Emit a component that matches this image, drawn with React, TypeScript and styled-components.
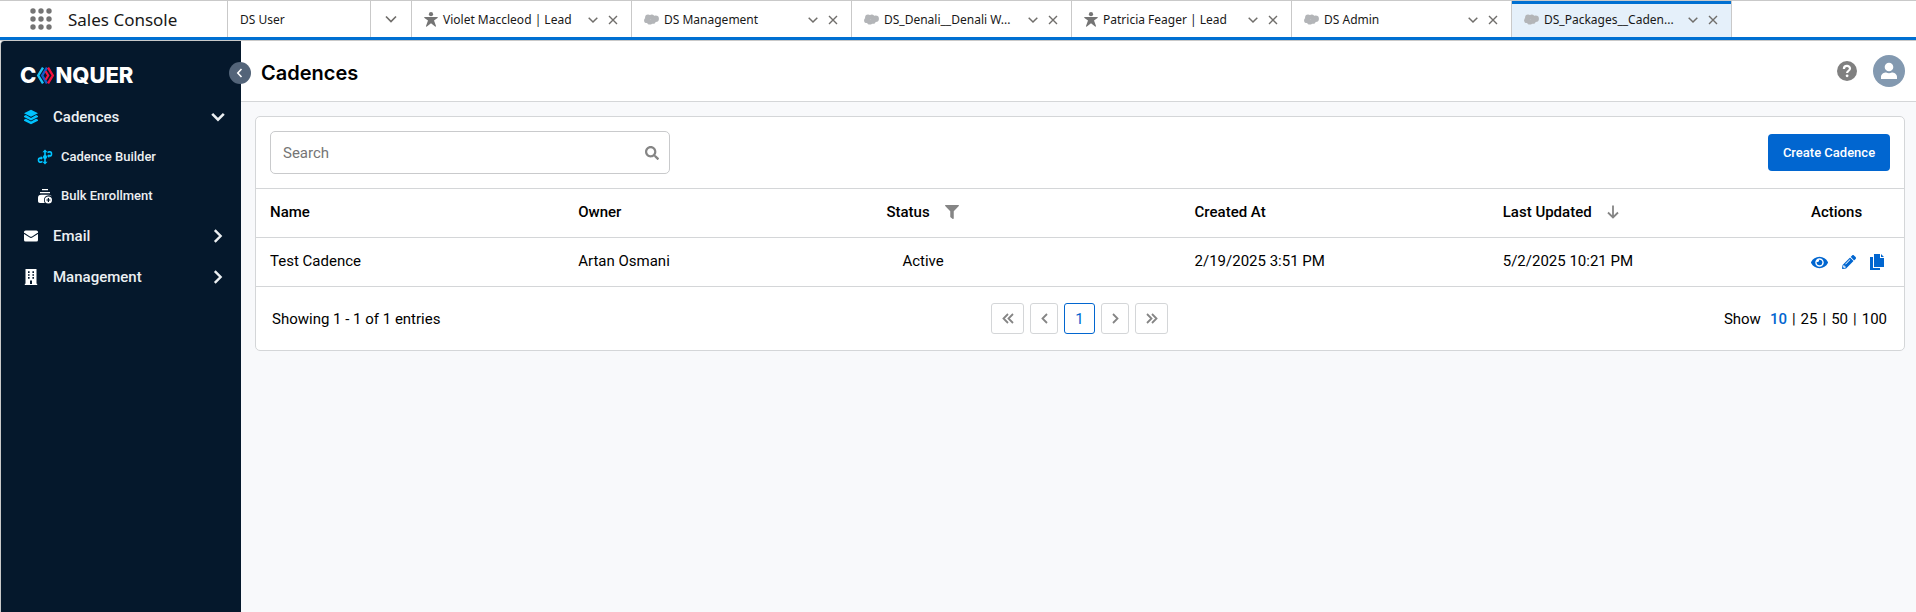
import React from 'react';
import styled, { createGlobalStyle } from 'styled-components';
import { FaEye, FaFilter, FaPencilAlt, FaSearch } from 'react-icons/fa';

const ui = 'Roboto, "Liberation Sans", sans-serif';
const console_ = '"Noto Sans", "Open Sans", sans-serif';
const display = 'Inter, "Liberation Sans", sans-serif';

const GlobalStyle = createGlobalStyle`
  *, *::before, *::after { box-sizing: border-box; }
  body { margin: 0; background: #f8f9fb; color: #000; font-family: ${ui}; font-size: 15px; }
  button { font: inherit; color: inherit; border: 0; padding: 0; background: none; cursor: pointer; }
  a { color: inherit; text-decoration: none; }
  ul { list-style: none; margin: 0; padding: 0; }
  svg { display: block; flex: none; }
`;

const Page = styled.div`
  display: flex;
  flex-direction: column;
  min-height: 100vh;
`;

/* Console bar */
const ConsoleBar = styled.header`
  display: flex;
  height: 41px;
  background: #fff;
  border-top: 1px solid #c9c9c9;
  border-bottom: 1px solid #c9c9c9;
  box-shadow: inset 0 -3px 0 #0070d2;
  padding-bottom: 3px;
  font-family: ${console_};
  font-size: 12px;
  color: #181818;
`;

const Launcher = styled.div`
  display: flex;
  align-items: center;
  gap: 16px;
  width: 227px;
  padding-left: 30px;
  font-size: 17px;
`;

const TabList = styled.nav`
  display: flex;
  border-right: 1px solid #c9c9c9;
`;

const Tab = styled.div<{ $active?: boolean; $width: number }>`
  display: flex;
  align-items: center;
  width: ${p => p.$width}px;
  padding: 0 13px 0 12px;
  border-left: 1px solid #c9c9c9;
  background: ${p => (p.$active ? '#e5f0fa' : 'transparent')};
  box-shadow: ${p => (p.$active ? 'inset 0 3px 0 #0070d2' : 'none')};
`;

const TabLink = styled.a`
  display: flex;
  align-items: center;
  gap: 5px;
  flex: 1;
  min-width: 0;
  white-space: nowrap;
  overflow: hidden;
`;

const TabActions = styled.div`
  display: flex;
  gap: 10px;
  padding-top: 2px;
  color: #706e6b;
`;

const TabMenu = styled.button`
  display: grid;
  place-items: center;
  width: 41px;
  border-left: 1px solid #c9c9c9;
  color: #706e6b;
`;

/* Application shell */
const Shell = styled.div`
  display: flex;
  flex: 1;
`;

const Sidebar = styled.aside`
  position: relative;
  width: 241px;
  flex: none;
  padding-top: 22px;
  background: #05182c;
  border-left: 1px solid #c9c9c9;
  border-top-left-radius: 4px;
  color: #eceff2;
`;

const Logo = styled.a`
  display: flex;
  align-items: center;
  height: 24px;
  margin: 0 0 9px 19px;
  color: #fff;
  font: 800 22px/24px ${display};
`;

const Collapse = styled.button`
  position: absolute;
  top: 21px;
  right: -10px;
  display: grid;
  place-items: center;
  width: 22px;
  height: 22px;
  border-radius: 50%;
  background: #536479;
  color: #fff;
`;

const NavButton = styled.button`
  display: flex;
  align-items: center;
  width: 100%;
  height: 41px;
  padding: 0 16px 0 22px;
  gap: 14px;
  font-size: 15px;
  font-weight: 500;
`;

const NavLabel = styled.span`
  flex: 1;
  text-align: left;
`;

const NavIcon = styled.span`
  display: grid;
  place-items: center;
  width: 16px;
`;

const SubLink = styled.a`
  display: flex;
  align-items: center;
  gap: 8px;
  height: 39px;
  padding-left: 36px;
  font-size: 13px;
  font-weight: 500;
`;

const Main = styled.main`
  flex: 1;
  min-width: 0;
`;

const TitleBar = styled.div`
  display: flex;
  align-items: center;
  height: 61px;
  padding: 0 11px 0 20px;
  background: #fff;
  border-bottom: 1px solid #d4d6d8;
`;

const Title = styled.h1`
  flex: 1;
  margin: 0;
  padding-top: 4px;
  font: 600 20px/28px ${display};
`;

const Tools = styled.div`
  display: flex;
  align-items: center;
  gap: 16px;
`;

const Card = styled.section`
  margin: 14px 11px 14px 14px;
  background: #fff;
  border: 1px solid #d4d6d8;
  border-radius: 5px;
`;

const Toolbar = styled.div`
  display: flex;
  align-items: center;
  justify-content: space-between;
  padding: 14px;
  border-bottom: 1px solid #d4d6d8;
`;

const SearchBox = styled.label`
  display: flex;
  align-items: center;
  width: 400px;
  height: 43px;
  padding: 0 10px 0 12px;
  border: 1px solid #c9cacc;
  border-radius: 5px;
  color: #858585;
`;

const SearchInput = styled.input`
  flex: 1;
  min-width: 0;
  padding: 0;
  border: 0;
  outline: 0;
  background: none;
  font: 400 15px/20px ${ui};
  &::placeholder { color: #757575; opacity: 1; }
`;

const Primary = styled.button`
  width: 122px;
  height: 37px;
  border-radius: 4px;
  background: #0166d0;
  color: #fff;
  font-size: 13px;
  font-weight: 500;
`;

const Table = styled.table`
  width: 100%;
  table-layout: fixed;
  border-collapse: separate;
  border-spacing: 0;
`;

const HeadCell = styled.th<{ $width?: number }>`
  width: ${p => (p.$width ? `${p.$width}px` : 'auto')};
  height: 49px;
  padding: 0 0 2px 14px;
  border-bottom: 1px solid #d4d6d8;
  text-align: left;
  font-weight: 500;
`;

const HeadContent = styled.div`
  display: flex;
  align-items: center;
  gap: 15px;
`;

const HeadIcon = styled.button`
  color: #858585;
`;

const Cell = styled.td<{ $indent?: boolean }>`
  height: 49px;
  padding: 0 0 2px ${p => (p.$indent ? 30 : 14)}px;
  border-bottom: 1px solid #d4d6d8;
`;

const RowActions = styled.div`
  display: flex;
  align-items: center;
  gap: 14px;
  padding-top: 2px;
  color: #0166d0;
`;

const Footer = styled.footer`
  display: grid;
  grid-template-columns: 1fr auto 1fr;
  align-items: center;
  height: 63px;
  padding: 0 17px 0 16px;
`;

const Pager = styled.nav`
  display: flex;
  gap: 6px;
`;

const PageButton = styled.button<{ $width: number; $current?: boolean }>`
  display: grid;
  place-items: center;
  width: ${p => p.$width}px;
  height: 31px;
  border: 1px solid ${p => (p.$current ? '#0166d0' : '#d4d6d8')};
  border-radius: 3px;
  color: ${p => (p.$current ? '#0166d0' : '#858585')};
`;

const PageSizes = styled.div`
  display: flex;
  justify-content: flex-end;
  gap: 5px;
`;

const SizeLabel = styled.span`
  margin-right: 4px;
`;

const SizeLink = styled.a<{ $current?: boolean }>`
  color: ${p => (p.$current ? '#0166d0' : 'inherit')};
  font-weight: ${p => (p.$current ? 500 : 400)};
`;

/* Icons */
const Chevron = ({ d, w, h, sw = 2 }: { d: string; w: number; h: number; sw?: number }) => (
  <svg width={w} height={h} viewBox={`0 0 ${w} ${h}`} fill="none" stroke="currentColor" strokeWidth={sw}>
    <path d={d} />
  </svg>
);

const TabChevron = () => <Chevron w={10} h={8} sw={1.5} d="M.7 1.7 5 6l4.3-4.3" />;
const Down = () => <Chevron w={14} h={10} sw={2.6} d="M1.2 1.8 7 7.6l5.8-5.8" />;
const Right = () => <Chevron w={14} h={14} sw={2.4} d="M3.8 1.2 9.6 7l-5.8 5.8" />;

const Dots = () => (
  <svg width="22" height="22" viewBox="0 0 22 22" fill="#747474">
    {[3, 11, 19].flatMap(y => [3, 11, 19].map(x => <circle key={`${x}-${y}`} cx={x} cy={y} r="2.7" />))}
  </svg>
);

const LeadIcon = () => (
  <svg width="14" height="15" viewBox="0 0 14 15" fill="#747474">
    <circle cx="7" cy="2.2" r="2.1" />
    <path d="M.8 5.1h12.4c.6 0 .8.7.3 1L10 8.4l2 5.5c.2.6-.4 1-.9.6L7 11.2l-4.1 3.3c-.5.4-1.1-.1-.9-.6l2-5.5L.5 6.1c-.5-.3-.3-1 .3-1z" />
  </svg>
);

const CloudIcon = () => (
  <svg width="15" height="11" viewBox="0 0 15 11" fill="#b3b5b8">
    <circle cx="4" cy="3.4" r="2.9" />
    <circle cx="7.8" cy="3" r="2.6" />
    <circle cx="11.7" cy="4.8" r="3.2" />
    <circle cx="2.8" cy="6.4" r="2.7" />
    <circle cx="5.8" cy="7.9" r="2.7" />
    <circle cx="9" cy="7.2" r="2.6" />
  </svg>
);

const HexMark = () => (
  <svg width="19" height="17" viewBox="0 0 19 17" fill="none" strokeWidth="2.4">
    <path stroke="#19c3f5" d="M7 .6 2.2 8.5 7 16.4" />
    <path stroke="#1458c8" d="M11 .6 6.2 8.5 11 16.4" />
    <path stroke="#f4123f" d="M12 .6l4.8 7.9L12 16.4" />
    <path stroke="#f4123f" strokeWidth="2.2" d="M9.6 4.2l2.6 4.3-2.6 4.3" />
  </svg>
);

const LayersIcon = () => (
  <svg width="16" height="16" viewBox="0 0 16 16" fill="#00c3ff">
    <path d="M8 .8 15 4.3 8 7.8 1 4.3z" />
    <path d="M1 7l1.900-.9L8 9l5.1-2.900 1.900.9v1L8 11.400 1 8z" />
    <path d="M1 10.700l1.900-.9L8 12.600l5.1-2.800 1.900.9v1L8 15.200l-7-3.500z" />
  </svg>
);

const BuilderIcon = () => (
  <svg width="16" height="16" viewBox="0 0 16 16" fill="#00c3ff">
    <path d="M8 .4l2.600 2.900H8.800v9.400h1.800L8 15.600l-2.600-2.900h1.800V3.300H5.400z" />
    <circle cx="8" cy="8" r="2.100" />
    <path fill="none" stroke="#00c3ff" strokeWidth="1.600" d="M10.500 3.400 12 2.900h1c2 0 2 4 0 4h-1.500M5.500 12.600 4 13.100H3c-2 0-2-4 0-4h1.500" />
    <path d="M12.200 4.900v4L10 6.900zM3.800 7.100v4L6 9.100z" />
  </svg>
);

const EnrollIcon = () => (
  <svg width="16" height="16" viewBox="0 0 16 16" fill="#fff">
    <path d="M5 1h6v1.300H5zM3 4h10v1.300H3zM4 6.800h8c1.300 0 2.200.8 2.700 1.800A4.600 4.600 0 0 0 7 12.200c0 1 .3 1.900.8 2.800H3c-1.300 0-2-.7-2-2V9.800c0-1.800 1.200-3 3-3z" />
    <path fillRule="evenodd" d="M11.400 8.400a3.600 3.600 0 1 1 0 7.200 3.600 3.600 0 0 1 0-7.200zm-.6 1.600v1.400H9.400v1.200h1.400V14H12v-1.400h1.400v-1.200H12V10z" />
  </svg>
);

const MailIcon = () => (
  <svg width="16" height="12" viewBox="0 0 16 12" fill="#fff">
    <rect x="1" y=".5" width="14" height="11" rx="1.6" />
    <path fill="none" stroke="#05182c" strokeWidth="1.1" d="M1 3.200l5.600 3.700q1.400.9 2.800 0L15 3.200" />
  </svg>
);

const BuildingIcon = () => (
  <svg width="16" height="16" viewBox="0 0 16 16">
    <path fill="#fff" d="M2.500 0h11v14.800h.7V16H1.800v-1.200h.7z" />
    <path fill="#05182c" d="M5 2.300h1.600v1.600H5zM9.400 2.300H11v1.600H9.400zM5 5.200h1.600v1.600H5zM9.400 5.200H11v1.600H9.400zM5 8.100h1.600v1.600H5zM9.400 8.100H11v1.600H9.400zM7 11.500h2V15H7z" />
  </svg>
);

const HelpIcon = () => (
  <svg width="20" height="20" viewBox="0 0 20 20">
    <circle cx="10" cy="10" r="10" fill="#808080" />
    <path fill="none" stroke="#fff" strokeWidth="2.2" d="M6.900 7.900C6.900 3.800 13 4 13 7.500c0 2.300-2.900 2.200-2.900 4.600" />
    <circle cx="10.1" cy="14.8" r="1.4" fill="#fff" />
  </svg>
);

const AvatarIcon = () => (
  <svg width="32" height="32" viewBox="0 0 32 32">
    <circle cx="16" cy="16" r="16" fill="#8399b0" />
    <circle cx="16" cy="12" r="4.3" fill="#fff" />
    <path fill="#fff" d="M8 24v-2.200c0-2.800 3-4.300 5.200-4.300 1.800 1 3.800 1 5.600 0 2.200 0 5.200 1.500 5.200 4.300V24z" />
  </svg>
);

const CopyIcon = () => (
  <svg width="14" height="16" viewBox="0 0 14 16" fill="currentColor">
    <path d="M4 0h6v4h4v9H4zM11 0l3 3h-3z" />
    <path d="M0 3h3v11h7v2H0z" />
  </svg>
);

const ArrowDown = () => (
  <svg width="12" height="14" viewBox="0 0 12 14" fill="none" stroke="currentColor" strokeWidth="1.8">
    <path d="M6 .5v12M1 7.500l5 5 5-5" />
  </svg>
);

type TabData = { label: string; icon?: 'lead' | 'cloud'; active?: boolean };

const tabs: TabData[] = [
  { label: 'Violet Maccleod | Lead', icon: 'lead' },
  { label: 'DS Management', icon: 'cloud' },
  { label: 'DS_Denali__Denali W...', icon: 'cloud' },
  { label: 'Patricia Feager | Lead', icon: 'lead' },
  { label: 'DS Admin', icon: 'cloud' },
  { label: 'DS_Packages__Caden...', icon: 'cloud', active: true },
];

const pagerButtons = [
  { label: 'First page', w: 12, width: 33, d: 'M6 1 1.500 5.500 6 10M11 1 6.500 5.500 11 10' },
  { label: 'Previous page', w: 7, width: 28, d: 'M6 1 1.500 5.500 6 10' },
  { label: 'Next page', w: 7, width: 28, d: 'M1 1l4.500 4.500L1 10' },
  { label: 'Last page', w: 12, width: 33, d: 'M1 1l4.500 4.500L1 10M6 1l4.500 4.500L6 10' },
];

const PagerStep = ({ index }: { index: number }) => {
  const b = pagerButtons[index];
  return (
    <PageButton type="button" aria-label={b.label} $width={b.width}>
      <Chevron w={b.w} h={11} sw={1.8} d={b.d} />
    </PageButton>
  );
};

export default function App() {
  return (
    <Page>
      <GlobalStyle />
      <ConsoleBar>
        <Launcher>
          <button type="button" aria-label="App Launcher"><Dots /></button>
          <span>Sales Console</span>
        </Launcher>
        <TabList aria-label="Workspace tabs">
          <Tab $width={143}><TabLink href="#user">DS User</TabLink></Tab>
          <TabMenu type="button" aria-label="Show navigation menu">
            <Chevron w={12} h={8} sw={1.7} d="M1 1.500l5 5 5-5" />
          </TabMenu>
          {tabs.map(t => (
            <Tab key={t.label} $width={220} $active={t.active}>
              <TabLink href="#tab">
                {t.icon === 'lead' ? <LeadIcon /> : <CloudIcon />}
                <span>{t.label}</span>
              </TabLink>
              <TabActions>
                <button type="button" aria-label={`Actions for ${t.label}`}><TabChevron /></button>
                <button type="button" aria-label={`Close ${t.label}`}>
                  <Chevron w={10} h={10} sw={1.4} d="M1 1l8 8M9 1 1 9" />
                </button>
              </TabActions>
            </Tab>
          ))}
        </TabList>
      </ConsoleBar>

      <Shell>
        <Sidebar>
          <Logo href="#home" aria-label="Conquer">
            <span>C</span>
            <HexMark />
            <span>NQUER</span>
          </Logo>
          <Collapse type="button" aria-label="Collapse sidebar">
            <Chevron w={8} h={10} sw={1.6} d="M5.500 1 1.800 5l3.700 4" />
          </Collapse>
          <nav aria-label="Main">
            <ul>
              <li>
                <NavButton type="button" aria-expanded="true">
                  <NavIcon><LayersIcon /></NavIcon>
                  <NavLabel>Cadences</NavLabel>
                  <Down />
                </NavButton>
                <ul>
                  <li><SubLink href="#builder"><BuilderIcon />Cadence Builder</SubLink></li>
                  <li><SubLink href="#enroll"><EnrollIcon />Bulk Enrollment</SubLink></li>
                </ul>
              </li>
              <li>
                <NavButton type="button" aria-expanded="false">
                  <NavIcon><MailIcon /></NavIcon>
                  <NavLabel>Email</NavLabel>
                  <Right />
                </NavButton>
              </li>
              <li>
                <NavButton type="button" aria-expanded="false">
                  <NavIcon><BuildingIcon /></NavIcon>
                  <NavLabel>Management</NavLabel>
                  <Right />
                </NavButton>
              </li>
            </ul>
          </nav>
        </Sidebar>

        <Main>
          <TitleBar>
            <Title>Cadences</Title>
            <Tools>
              <button type="button" aria-label="Help"><HelpIcon /></button>
              <button type="button" aria-label="Account"><AvatarIcon /></button>
            </Tools>
          </TitleBar>

          <Card>
            <Toolbar>
              <SearchBox>
                <SearchInput type="text" placeholder="Search" aria-label="Search" />
                <FaSearch size={14} />
              </SearchBox>
              <Primary type="button">Create Cadence</Primary>
            </Toolbar>

            <Table>
              <thead>
                <tr>
                  <HeadCell>Name</HeadCell>
                  <HeadCell>Owner</HeadCell>
                  <HeadCell>
                    <HeadContent>
                      Status
                      <HeadIcon type="button" aria-label="Filter by status"><FaFilter size={14} /></HeadIcon>
                    </HeadContent>
                  </HeadCell>
                  <HeadCell>Created At</HeadCell>
                  <HeadCell>
                    <HeadContent>
                      Last Updated
                      <HeadIcon type="button" aria-label="Sort by last updated"><ArrowDown /></HeadIcon>
                    </HeadContent>
                  </HeadCell>
                  <HeadCell $width={107}>Actions</HeadCell>
                </tr>
              </thead>
              <tbody>
                <tr>
                  <Cell>Test Cadence</Cell>
                  <Cell>Artan Osmani</Cell>
                  <Cell $indent>Active</Cell>
                  <Cell>2/19/2025 3:51 PM</Cell>
                  <Cell>5/2/2025 10:21 PM</Cell>
                  <Cell>
                    <RowActions>
                      <button type="button" aria-label="View"><FaEye size={17} /></button>
                      <button type="button" aria-label="Edit"><FaPencilAlt size={14} /></button>
                      <button type="button" aria-label="Copy"><CopyIcon /></button>
                    </RowActions>
                  </Cell>
                </tr>
              </tbody>
            </Table>

            <Footer>
              <span>Showing 1 - 1 of 1 entries</span>
              <Pager aria-label="Pagination">
                <PagerStep index={0} />
                <PagerStep index={1} />
                <PageButton type="button" aria-current="page" $width={31} $current>1</PageButton>
                <PagerStep index={2} />
                <PagerStep index={3} />
              </Pager>
              <PageSizes>
                <SizeLabel>Show</SizeLabel>
                <SizeLink href="#10" $current>10</SizeLink>
                <span>|</span>
                <SizeLink href="#25">25</SizeLink>
                <span>|</span>
                <SizeLink href="#50">50</SizeLink>
                <span>|</span>
                <SizeLink href="#100">100</SizeLink>
              </PageSizes>
            </Footer>
          </Card>
        </Main>
      </Shell>
    </Page>
  );
}
